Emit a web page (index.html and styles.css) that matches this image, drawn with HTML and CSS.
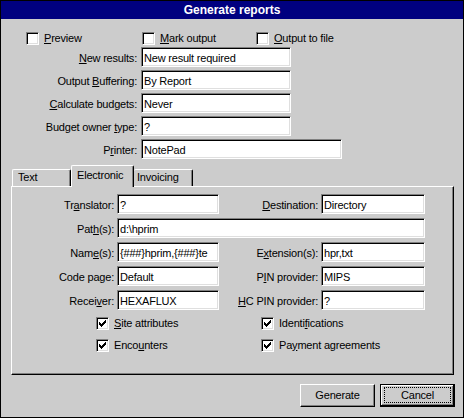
FILE: index.html
```html
<!DOCTYPE html>
<html>
<head>
<meta charset="utf-8">
<title>Generate reports</title>
<link rel="stylesheet" href="styles.css">
</head>
<body>
<div class="window">
  <div class="titlebar">Generate reports</div>

  <div class="opts">
    <div class="chk"><span class="box"></span><span><u>P</u>review</span></div>
    <div class="chk"><span class="box"></span><span><u>M</u>ark output</span></div>
    <div class="chk"><span class="box"></span><span><u>O</u>utput to file</span></div>
  </div>

  <div class="form">
    <span class="lbl"><u>N</u>ew results:</span><div class="field w150">New result required</div>
    <span class="lbl">Output <u>B</u>uffering:</span><div class="field w150">By Report</div>
    <span class="lbl"><u>C</u>alculate budgets:</span><div class="field w150">Never</div>
    <span class="lbl">Budget owner <u>t</u>ype:</span><div class="field w150">?</div>
    <span class="lbl">P<u>r</u>inter:</span><div class="field w201">NotePad</div>
  </div>

  <div class="tabs">
    <div class="tab tab-first">Text</div>
    <div class="tab tab-active">Electronic</div>
    <div class="tab tab-last">Invoicing</div>
  </div>

  <div class="panel">
    <div class="pgrid">
      <span class="lbl">Tr<u>a</u>nslator:</span><div class="field">?</div>
      <span class="lbl"><u>D</u>estination:</span><div class="field">Directory</div>

      <span class="lbl">Pat<u>h</u>(s):</span><div class="field span3">d:\hprim</div>

      <span class="lbl">Nam<u>e</u>(s):</span><div class="field">{###}hprim,{###}te</div>
      <span class="lbl">E<u>x</u>tension(s):</span><div class="field">hpr,txt</div>

      <span class="lbl">Code page:</span><div class="field">Default</div>
      <span class="lbl">P<u>I</u>N provider:</span><div class="field">MIPS</div>

      <span class="lbl">Recei<u>v</u>er:</span><div class="field">HEXAFLUX</div>
      <span class="lbl"><u>H</u>C PIN provider:</span><div class="field">?</div>
    </div>

    <div class="pchecks">
      <div class="chk"><span class="box"><svg class="tick" width="7" height="7" viewBox="0 0 7 7"><path d="M6 0h1v1h-1zM5 1h2v1h-2zM0 2h1v1H0zM4 2h3v1H4zM0 3h2v1H0zM3 3h3v1H3zM0 4h5v1H0zM1 5h3v1H1zM2 6h1v1H2z"/></svg></span><span><u>S</u>ite attributes</span></div>
      <div class="chk"><span class="box"><svg class="tick" width="7" height="7" viewBox="0 0 7 7"><path d="M6 0h1v1h-1zM5 1h2v1h-2zM0 2h1v1H0zM4 2h3v1H4zM0 3h2v1H0zM3 3h3v1H3zM0 4h5v1H0zM1 5h3v1H1zM2 6h1v1H2z"/></svg></span><span>Identi<u>f</u>ications</span></div>
      <div class="chk"><span class="box"><svg class="tick" width="7" height="7" viewBox="0 0 7 7"><path d="M6 0h1v1h-1zM5 1h2v1h-2zM0 2h1v1H0zM4 2h3v1H4zM0 3h2v1H0zM3 3h3v1H3zM0 4h5v1H0zM1 5h3v1H1zM2 6h1v1H2z"/></svg></span><span>Enco<u>u</u>nters</span></div>
      <div class="chk"><span class="box"><svg class="tick" width="7" height="7" viewBox="0 0 7 7"><path d="M6 0h1v1h-1zM5 1h2v1h-2zM0 2h1v1H0zM4 2h3v1H4zM0 3h2v1H0zM3 3h3v1H3zM0 4h5v1H0zM1 5h3v1H1zM2 6h1v1H2z"/></svg></span><span>Pa<u>y</u>ment agreements</span></div>
    </div>
  </div>

  <div class="buttons">
    <button class="btn">Generate</button>
    <button class="btn btn-default"><span class="focus">Cancel</span></button>
  </div>
</div>
</body>
</html>
```

FILE: styles.css
```css
html, body {
  margin: 0;
  padding: 0;
}

body {
  width: 464px;
  height: 418px;
  background: #cccccc;
  color: #000;
  font-family: "Liberation Sans", Arial, sans-serif;
  font-size: 11px;
  letter-spacing: -0.2px;
}

u {
  text-decoration: underline;
}

.window {
  width: 464px;
  height: 418px;
  box-sizing: border-box;
  border: 1px solid #000;
  background: #cccccc;
}

.titlebar {
  height: 18px;
  background: #000080;
  color: #fff;
  font-weight: bold;
  font-size: 12px;
  line-height: 18px;
  letter-spacing: 0;
  text-align: center;
}

/* checkbox row */
.opts {
  display: grid;
  grid-template-columns: 116px 114px auto;
  height: 13px;
  margin: 13px 0 0 25px;
}

.chk {
  display: flex;
  align-items: center;
  gap: 5px;
  height: 13px;
  line-height: 13px;
  white-space: nowrap;
}

.box {
  flex: none;
  width: 13px;
  height: 13px;
  box-sizing: border-box;
  background: #fff;
  border-style: solid;
  border-width: 1px;
  border-color: #808080 #fff #fff #808080;
  box-shadow: inset 1px 1px #000, inset -1px -1px #dfdfdf;
  display: flex;
  align-items: center;
  justify-content: center;
}

.tick {
  display: block;
  fill: #000;
  shape-rendering: crispEdges;
}

/* upper form */
.form {
  display: grid;
  grid-template-columns: 136px max-content;
  grid-auto-rows: 20px;
  column-gap: 4px;
  row-gap: 3px;
  align-items: baseline;
  margin-top: 2px;
}

.lbl {
  text-align: right;
  line-height: 14px;
  white-space: nowrap;
}

.field {
  height: 20px;
  box-sizing: border-box;
  background: #fff;
  border-style: solid;
  border-width: 1px;
  border-color: #808080 #fff #fff #808080;
  box-shadow: inset 1px 1px #000, inset -1px -1px #dfdfdf;
  padding: 3px 2px 0 2px;
  line-height: 14px;
  white-space: nowrap;
  overflow: hidden;
}

.w150 { width: 150px; }
.w201 { width: 201px; }

/* tabs */
.tabs {
  display: flex;
  align-items: flex-end;
  height: 21px;
  margin: 6px 0 0 11px;
}

.tab {
  box-sizing: border-box;
  height: 17px;
  line-height: 15px;
  border-top: 1px solid #fff;
  border-left: 1px solid #fff;
  border-right: 1px solid #000;
  border-radius: 2px 2px 0 0;
  box-shadow: inset -1px 0 #808080;
  padding-left: 5px;
  background: #cccccc;
  white-space: nowrap;
}

.tab-first { width: 59px; }

.tab-active {
  position: relative;
  z-index: 1;
  width: 63px;
  height: 22px;
  margin-bottom: -1px;
  padding-top: 2px;
}

.tab-last {
  width: 59px;
  border-left: none;
  padding-left: 3px;
}

/* panel */
.panel {
  width: 443px;
  height: 189px;
  box-sizing: border-box;
  margin-left: 10px;
  border-style: solid;
  border-width: 1px;
  border-color: #fff #000 #000 #fff;
  box-shadow: inset -1px -1px #808080;
  padding-top: 7px;
}

.pgrid {
  display: grid;
  grid-template-columns: 102px 102px 96px 104px;
  grid-auto-rows: 20px;
  column-gap: 3px;
  row-gap: 4px;
  align-items: baseline;
}

.span3 {
  grid-column: 2 / 5;
}

.pchecks {
  display: grid;
  grid-template-columns: 165px auto;
  row-gap: 9px;
  margin: 7px 0 0 84px;
}

/* buttons */
.buttons {
  display: flex;
  justify-content: flex-end;
  gap: 5px;
  margin-top: 9px;
  padding-right: 8px;
}

.btn {
  width: 75px;
  height: 23px;
  box-sizing: border-box;
  margin: 0;
  padding: 0;
  background: #cccccc;
  color: #000;
  font: inherit;
  letter-spacing: inherit;
  line-height: 21px;
  text-align: center;
  border-style: solid;
  border-width: 1px;
  border-color: #fff #000 #000 #fff;
  box-shadow: inset -1px -1px #808080;
}

.btn-default {
  border-color: #000;
  padding: 2px 3px 3px 3px;
  line-height: 15px;
  box-shadow: inset -1px -1px #000, inset 1px 1px #fff, inset -2px -2px #808080;
}

.focus {
  display: block;
  height: 100%;
  box-sizing: border-box;
  border: 1px dotted #000;
}
```
